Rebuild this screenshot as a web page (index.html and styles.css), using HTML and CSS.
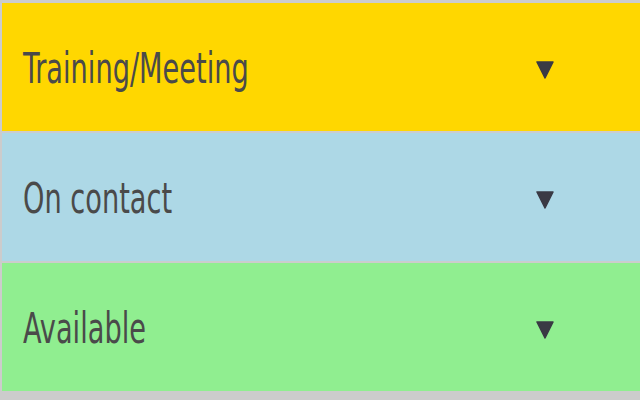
FILE: index.html
```html
<!DOCTYPE html>
<html>
<head>
<meta charset="utf-8">
<link rel="stylesheet" href="styles.css">
</head>
<body>
<div class="list">
  <div class="row training"><div class="cell"><span class="label">Training/Meeting</span></div><svg class="caret" viewBox="0 0 18 18"><polygon points="1,1 17,1 9,17" /></svg></div>
  <div class="row contact"><div class="cell"><span class="label">On contact</span></div><svg class="caret" viewBox="0 0 18 18"><polygon points="1,1 17,1 9,17" /></svg></div>
  <div class="row available"><div class="cell"><span class="label">Available</span></div><svg class="caret" viewBox="0 0 18 18"><polygon points="1,1 17,1 9,17" /></svg></div>
</div>
</body>
</html>
```
FILE: styles.css
```css
html, body {
  margin: 0;
  padding: 0;
  background: #cccccc;
  width: 640px;
  height: 400px;
  overflow: hidden;
}
.list {
  display: flex;
  flex-direction: column;
  gap: 2px;
  padding: 3px 0 0 2px;
}
.row {
  height: 128px;
  display: flex;
  align-items: center;
  padding-left: 21px;
  box-sizing: border-box;
  color: #4a4a4a;
}
.cell {
  flex: 1;
}
.label {
  display: inline-block;
  font-family: "DejaVu Sans Condensed", "DejaVu Sans", sans-serif;
  font-size: 42px;
  margin-top: 2px;
  transform: scaleX(0.72);
  transform-origin: left center;
}
.caret {
  width: 18px;
  height: 18px;
  margin-right: 86px;
  margin-top: 6px;
  fill: #3a3a44;
  stroke: #3a3a44;
  stroke-width: 1.5;
  stroke-linejoin: round;
}
.training { background: #ffd700; }
.contact { background: #add8e6; }
.available { background: #90ee90; }
```
